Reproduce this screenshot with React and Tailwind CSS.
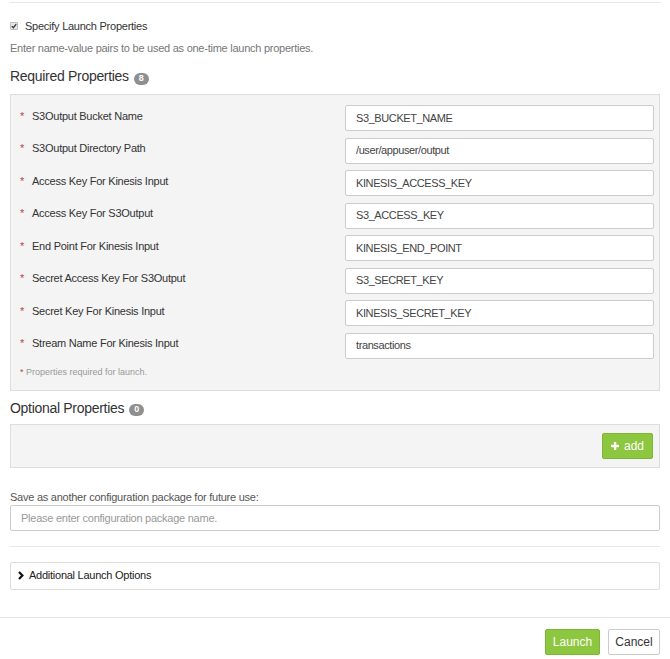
import React from 'react';

const required = [
  { label: 'S3Output Bucket Name', value: 'S3_BUCKET_NAME' },
  { label: 'S3Output Directory Path', value: '/user/appuser/output' },
  { label: 'Access Key For Kinesis Input', value: 'KINESIS_ACCESS_KEY' },
  { label: 'Access Key For S3Output', value: 'S3_ACCESS_KEY' },
  { label: 'End Point For Kinesis Input', value: 'KINESIS_END_POINT' },
  { label: 'Secret Access Key For S3Output', value: 'S3_SECRET_KEY' },
  { label: 'Secret Key For Kinesis Input', value: 'KINESIS_SECRET_KEY' },
  { label: 'Stream Name For Kinesis Input', value: 'transactions' },
];

function Badge({ count }) {
  return (
    <span className="ml-[5px] mt-[3px] inline-flex h-[12px] min-w-[15px] items-center justify-center rounded-full bg-[#8f8f8f] px-[4px] text-[9px] font-bold leading-none tracking-normal text-white">
      {count}
    </span>
  );
}

function App() {
  return (
    <div className="min-h-screen bg-white px-[10px] font-['Liberation_Sans',Arial,sans-serif] text-[11px] tracking-[-0.25px] text-[#333]">
      <div className="pt-[2px]">
        <div className="-mx-px border-t border-[#e8e8e8]" />
      </div>

      <div className="mt-[15px] flex h-[16px] items-center">
        <span className="flex h-[8px] w-[8px] items-center justify-center rounded-[1px] border border-[#bbb] bg-[#e6e6e6]">
          <svg width="6" height="6" viewBox="0 0 6 6">
            <path d="M0.8 3.1 L2.4 4.7 L5.2 1.2" fill="none" stroke="#333" strokeWidth="1.3" />
          </svg>
        </span>
        <span className="ml-[7px] text-[#333]">Specify Launch Properties</span>
      </div>

      <p className="mt-[5px] pt-px leading-[16px] text-[#777]">
        Enter name-value pairs to be used as one-time launch properties.
      </p>

      <div className="mt-[11px] flex h-[20px] items-center">
        <h3 className="pb-[2px] text-[14px] leading-[20px] tracking-[-0.3px] text-[#333]">Required Properties</h3>
        <Badge count={8} />
      </div>

      <div className="mt-[7px] border border-[#ddd] bg-[#f4f4f4] pb-[12px] pl-[9px] pr-[5px] pt-[10px]">
        <div className="flex flex-col gap-[6.5px]">
          {required.map((p) => (
            <div key={p.label} className="flex h-[26px] items-center">
              <div className="flex flex-1 items-center pb-[4px]">
                <span className="w-[12px] text-[#b5443f]">*</span>
                <span>{p.label}</span>
              </div>
              <div className="flex h-[26px] w-[309px] items-center rounded-[2px] border border-[#ccc] bg-white px-[10px] tracking-[-0.4px] text-[#444]">
                {p.value}
              </div>
            </div>
          ))}
        </div>
        <p className="mt-[7.5px] text-[9px] leading-[12px] tracking-normal text-[#999]">
          <span className="text-[#b5443f]">*</span> Properties required for launch.
        </p>
      </div>

      <div className="mt-[7px] flex h-[20px] items-center">
        <h3 className="pb-px text-[14px] leading-[20px] tracking-[-0.3px] text-[#333]">Optional Properties</h3>
        <Badge count={0} />
      </div>

      <div className="mt-[6px] flex justify-end border border-[#ddd] bg-[#f4f4f4] py-[8px] pr-[6px]">
        <button
          type="button"
          className="flex h-[26px] w-[51px] items-center justify-center gap-[5px] rounded-[2px] border border-[#7fb537] bg-[#8dc63f] text-[12px] tracking-normal text-white"
        >
          <svg width="8" height="8" viewBox="0 0 8 8">
            <rect x="2.9" y="0" width="2.4" height="8" fill="#fff" />
            <rect x="0" y="2.8" width="8" height="2.4" fill="#fff" />
          </svg>
          add
        </button>
      </div>

      <p className="mt-[21px] leading-[16px] text-[#555]">Save as another configuration package for future use:</p>
      <div className="flex h-[26px] items-center rounded-[2px] border border-[#ccc] bg-white px-[10px] text-[#999]">
        Please enter configuration package name.
      </div>

      <div className="mt-[15px] border-t border-[#e8e8e8]" />

      <div className="mt-[15px] flex h-[28px] items-center rounded-[2px] border border-[#ddd] bg-white pb-px pl-[7px]">
        <svg width="6" height="9" viewBox="0 0 6 9">
          <path d="M1 1 L4.4 4.5 L1 8" fill="none" stroke="#111" strokeWidth="2.2" />
        </svg>
        <span className="ml-[5px] text-[#222]">Additional Launch Options</span>
      </div>

      <div className="-mx-[10px] mt-[27px] border-t border-[#e5e5e5]" />

      <div className="mt-[11px] flex justify-end gap-[8px] pb-[4px]">
        <button
          type="button"
          className="h-[26px] w-[55px] rounded-[2px] border border-[#7fb537] bg-[#8dc63f] text-[12px] tracking-normal text-white"
        >
          Launch
        </button>
        <button
          type="button"
          className="h-[26px] w-[52px] rounded-[2px] border border-[#ccc] bg-white text-[12px] tracking-normal text-[#333]"
        >
          Cancel
        </button>
      </div>
    </div>
  );
}

export default App;
